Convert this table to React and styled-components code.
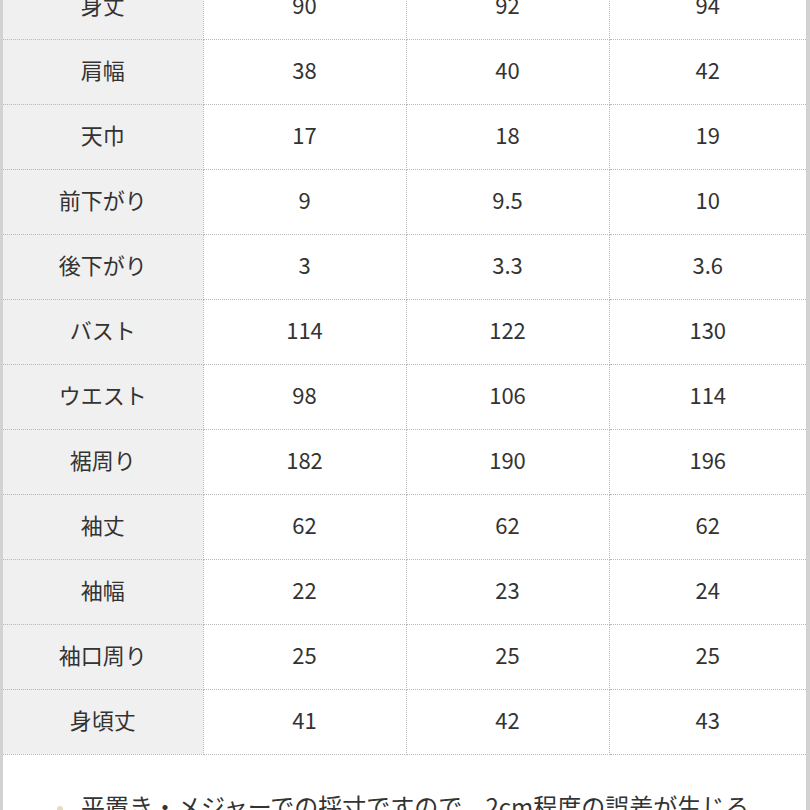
import React from 'react';
import styled, { createGlobalStyle } from 'styled-components';

const GlobalStyle = createGlobalStyle`
  html, body {
    margin: 0;
    padding: 0;
    background: #ffffff;
    overflow: hidden;
  }
  body {
    font-family: "Noto Sans CJK JP", "Noto Sans", sans-serif;
    color: #333333;
  }
`;

const Frame = styled.div`
  width: 810px;
  height: 810px;
  box-sizing: border-box;
  border-left: 3px solid #d2d2d2;
  border-right: 4px solid #d2d2d2;
  overflow: hidden;
`;

const Table = styled.table`
  width: 100%;
  border-collapse: collapse;
  table-layout: fixed;
  margin-top: -26px;
`;

const Row = styled.tr`
  height: 65px;
`;

const Cell = styled.td`
  border-bottom: 1px dotted #b8b8b8;
  border-right: 1px dotted #b8b8b8;
  text-align: center;
  vertical-align: middle;
  font-size: 22px;
  padding: 0 0 5px 0;
  background: ${props => (props.head ? '#f0f0f0' : '#ffffff')};
  &:last-child {
    border-right: none;
  }
`;

const Note = styled.p`
  margin: 33px 0 0 0;
  padding-left: 54px;
  font-size: 24px;
  line-height: 36px;
  white-space: nowrap;
  color: #333333;
`;

const Bullet = styled.span`
  display: inline-block;
  width: 6px;
  height: 6px;
  border-radius: 50%;
  background: #e6dcc0;
  margin-right: 18px;
  vertical-align: middle;
`;

const rows = [
  ['身丈', 90, 92, 94],
  ['肩幅', 38, 40, 42],
  ['天巾', 17, 18, 19],
  ['前下がり', 9, 9.5, 10],
  ['後下がり', 3, 3.3, 3.6],
  ['バスト', 114, 122, 130],
  ['ウエスト', 98, 106, 114],
  ['裾周り', 182, 190, 196],
  ['袖丈', 62, 62, 62],
  ['袖幅', 22, 23, 24],
  ['袖口周り', 25, 25, 25],
  ['身頃丈', 41, 42, 43]
];

const App = () => (
  <Frame>
    <GlobalStyle />
    <Table>
      <colgroup>
        <col style={{ width: 200 }} />
        <col style={{ width: 203 }} />
        <col style={{ width: 203 }} />
        <col />
      </colgroup>
      <tbody>
        {rows.map(([label, ...values]) => (
          <Row key={label}>
            <Cell head>{label}</Cell>
            {values.map((v, i) => (
              <Cell key={i}>{v}</Cell>
            ))}
          </Row>
        ))}
      </tbody>
    </Table>
    <Note>
      <Bullet />平置き・メジャーでの採寸ですので、2cm程度の誤差が生じる
    </Note>
  </Frame>
);

export default App;
